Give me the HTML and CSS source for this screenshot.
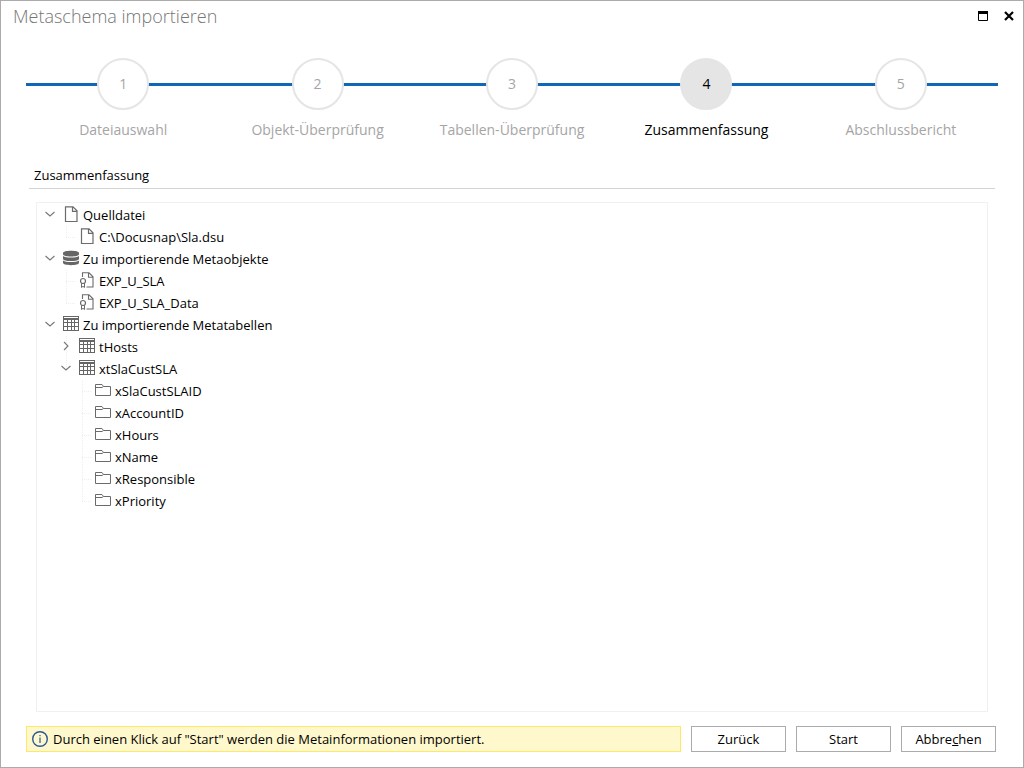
FILE: index.html
```
<!DOCTYPE html>
<html lang="de">
<head>
    <meta charset="UTF-8">
    <meta name="viewport" content="width=device-width, initial-scale=1.0">
    <title>Metaschema importieren</title>
    <link rel="stylesheet" href="styles.css">
</head>
<body>
<!-- icons used more than once -->
<svg class="symbols" width="0" height="0" aria-hidden="true">
    <symbol id="chevron-down" viewBox="0 0 16 16">
        <path d="M3.500 6L8 10l4.500-4" fill="none" stroke="#777" stroke-width="1.1"/>
    </symbol>
    <symbol id="chevron-right" viewBox="0 0 16 16">
        <path d="M6 4l4 4-4 4" fill="none" stroke="#777" stroke-width="1.1"/>
    </symbol>
    <symbol id="file" viewBox="0 0 16 16">
        <path d="M2.500 .8h7.500l4 4v10.700H2.500zM9.500 .8v4.500H14" fill="none" stroke="#6b6b6b" stroke-width="1.200"/>
    </symbol>
    <symbol id="database" viewBox="0 0 16 16">
        <path d="M0 3.200C0 1.600 3.500 .8 8 .8s8 .8 8 2.400v1C16 5.700 12.500 6.400 8 6.400S0 5.700 0 4.200z" fill="#666"/>
        <path d="M0 6c1.500 1 4.500 1.500 8 1.500S14.500 7 16 6v2.700c0 1.600-3.500 2.300-8 2.300S0 10.300 0 8.700z" fill="#666"/>
        <path d="M0 10.500c1.500 1 4.500 1.500 8 1.500s6.500-.5 8-1.500v2.300c0 1.600-3.500 2.400-8 2.400S0 14.400 0 12.800z" fill="#666"/>
    </symbol>
    <symbol id="object" viewBox="0 0 16 16">
        <path d="M3.500 5V.8H10l4 4v10.200H7.500M9.500 .8v4.500H14" fill="none" stroke="#6b6b6b" stroke-width="1.100"/>
        <circle cx="4" cy="9" r="2.500" fill="#fff" stroke="#6b6b6b" stroke-width="1.200"/>
        <path d="M2.500 11.500v4L4 14.300l1.500 1.200v-4" fill="none" stroke="#6b6b6b"/>
    </symbol>
    <symbol id="table" viewBox="0 0 16 16">
        <path d="M0 0h16v15H0z" fill="#666"/>
        <path d="M1 1h14v1H1zM1 4h3v2H1zM5 4h3v2H5zM9 4h2v2H9zM12 4h3v2h-3zM1 7h3v3H1zM5 7h3v3H5zM9 7h2v3H9zM12 7h3v3h-3zM1 11h3v3H1zM5 11h3v3H5zM9 11h2v3H9zM12 11h3v3h-3z" fill="#fff"/>
    </symbol>
    <symbol id="folder" viewBox="0 0 16 16">
        <path d="M.5 2.500h6.500l1.500 2h7v9H.5zM.5 5.500H7l1.500-1" fill="none" stroke="#6b6b6b"/>
    </symbol>
</svg>

<div class="window">
    <header class="titlebar">
        <h1>Metaschema importieren</h1>
        <button type="button" class="window-button" aria-label="Maximieren">
            <svg width="10" height="10" viewBox="0 0 10 10"><path d="M.5 1.500h9v8h-9z" fill="none" stroke="#000"/><path d="M0 0h10v3H0z"/></svg>
        </button>
        <button type="button" class="window-button" aria-label="Schließen">
            <svg width="10" height="10" viewBox="0 0 10 10"><path d="M1 1l8 8M9 1L1 9" stroke="#000" stroke-width="2.200"/></svg>
        </button>
    </header>

    <ol class="steps">
        <li class="step"><span class="step-number">1</span>Dateiauswahl</li>
        <li class="step"><span class="step-number">2</span>Objekt-Überprüfung</li>
        <li class="step"><span class="step-number">3</span>Tabellen-Überprüfung</li>
        <li class="step active" aria-current="step"><span class="step-number">4</span>Zusammenfassung</li>
        <li class="step"><span class="step-number">5</span>Abschlussbericht</li>
    </ol>

    <main class="summary">
        <h2>Zusammenfassung</h2>
        <div class="tree-box">
            <ul class="tree">
                <li>
                    <div class="row">
                        <button type="button" class="toggle" aria-label="Quelldatei" aria-expanded="true"><svg class="icon"><use href="#chevron-down"/></svg></button>
                        <svg class="icon"><use href="#file"/></svg>
                        <span>Quelldatei</span>
                    </div>
                    <ul>
                        <li><div class="row leaf"><svg class="icon"><use href="#file"/></svg><span>C:\Docusnap\Sla.dsu</span></div></li>
                    </ul>
                </li>
                <li>
                    <div class="row">
                        <button type="button" class="toggle" aria-label="Zu importierende Metaobjekte" aria-expanded="true"><svg class="icon"><use href="#chevron-down"/></svg></button>
                        <svg class="icon"><use href="#database"/></svg>
                        <span>Zu importierende Metaobjekte</span>
                    </div>
                    <ul>
                        <li><div class="row leaf"><svg class="icon"><use href="#object"/></svg><span>EXP_U_SLA</span></div></li>
                        <li><div class="row leaf"><svg class="icon"><use href="#object"/></svg><span>EXP_U_SLA_Data</span></div></li>
                    </ul>
                </li>
                <li>
                    <div class="row">
                        <button type="button" class="toggle" aria-label="Zu importierende Metatabellen" aria-expanded="true"><svg class="icon"><use href="#chevron-down"/></svg></button>
                        <svg class="icon"><use href="#table"/></svg>
                        <span>Zu importierende Metatabellen</span>
                    </div>
                    <ul>
                        <li>
                            <div class="row">
                                <button type="button" class="toggle" aria-label="tHosts" aria-expanded="false"><svg class="icon"><use href="#chevron-right"/></svg></button>
                                <svg class="icon"><use href="#table"/></svg>
                                <span>tHosts</span>
                            </div>
                        </li>
                        <li>
                            <div class="row">
                                <button type="button" class="toggle" aria-label="xtSlaCustSLA" aria-expanded="true"><svg class="icon"><use href="#chevron-down"/></svg></button>
                                <svg class="icon"><use href="#table"/></svg>
                                <span>xtSlaCustSLA</span>
                            </div>
                            <ul>
                                <li><div class="row leaf"><svg class="icon"><use href="#folder"/></svg><span>xSlaCustSLAID</span></div></li>
                                <li><div class="row leaf"><svg class="icon"><use href="#folder"/></svg><span>xAccountID</span></div></li>
                                <li><div class="row leaf"><svg class="icon"><use href="#folder"/></svg><span>xHours</span></div></li>
                                <li><div class="row leaf"><svg class="icon"><use href="#folder"/></svg><span>xName</span></div></li>
                                <li><div class="row leaf"><svg class="icon"><use href="#folder"/></svg><span>xResponsible</span></div></li>
                                <li><div class="row leaf"><svg class="icon"><use href="#folder"/></svg><span>xPriority</span></div></li>
                            </ul>
                        </li>
                    </ul>
                </li>
            </ul>
        </div>
    </main>

    <footer class="footer">
        <p class="hint">
            <svg class="icon" viewBox="0 0 16 16"><circle cx="8" cy="8" r="7.300" fill="none" stroke="#2b579a" stroke-width="1.400"/><path d="M8 6.500v5.500M8 4v1.300" stroke="#2b579a" stroke-width="1.200"/></svg>
            <span>Durch einen Klick auf "Start" werden die Metainformationen importiert.</span>
        </p>
        <button type="button" class="button">Zurück</button>
        <button type="button" class="button">Start</button>
        <button type="button" class="button" accesskey="c">Abbre<u>c</u>hen</button>
    </footer>
</div>
</body>
</html>
```
FILE: styles.css
```
* {
    box-sizing: border-box;
}

body {
    margin: 0;
    background-color: #fff;
    color: #000;
    font-family: "Open Sans", "Noto Sans", sans-serif;
    font-size: 13px;
}

h1, h2, p, ul, ol {
    margin: 0;
    padding: 0;
    font-weight: normal;
}

ul, ol {
    list-style: none;
}

button {
    padding: 0;
    font: inherit;
    color: inherit;
    cursor: pointer;
}

.symbols {
    display: none;
}

.icon {
    display: block;
    flex: none;
    width: 16px;
    height: 16px;
}

.window {
    display: flex;
    flex-direction: column;
    min-height: 100vh;
    border: 1px solid #ababab;
}

/* title bar */
.titlebar {
    display: flex;
    align-items: center;
    height: 30px;
    padding: 0 4px 0 12px;
}

.titlebar h1 {
    flex: 1;
    color: #767676;
    font-size: 18px;
    font-weight: 300;
    line-height: 30px;
}

.window-button {
    display: flex;
    align-items: center;
    justify-content: center;
    width: 20px;
    height: 20px;
    margin-left: 6px;
    border: none;
    background: none;
}

/* wizard steps */
.steps {
    display: flex;
    margin: 27px 25px 0;
    background: linear-gradient(#0f67b6, #0f67b6) 0 25px / 100% 3px no-repeat;
}

.step {
    display: flex;
    flex: 1;
    flex-direction: column;
    align-items: center;
    gap: 10px;
    color: #a5a5a5;
    font-size: 14px;
    line-height: 20px;
}

.step-number {
    width: 52px;
    height: 52px;
    border: 2px solid #e5e5e5;
    border-radius: 50%;
    background-color: #fff;
    line-height: 48px;
    text-align: center;
}

.active {
    color: #000;
}

.active .step-number {
    background-color: #e5e5e5;
}

/* summary */
.summary {
    display: flex;
    flex: 1;
    flex-direction: column;
    margin: 25px 28px 0;
}

.summary h2 {
    padding: 0 5px 3px;
    border-bottom: 1px solid #d4d4d4;
    font-size: 13px;
    line-height: 20px;
}

.tree-box {
    flex: 1;
    margin: 13px 7px 14px;
    padding: 1px 5px;
    border: 1px solid #f0f0f0;
}

/* faint dotted guide line, one piece per child */
.tree ul > li {
    padding-left: 16px;
    background: repeating-linear-gradient(#eee 0 1px, #fff 1px 2px) 24px 0 / 1px 100% no-repeat;
}

.tree ul > li:last-child {
    background-size: 1px 11px;
}

.row {
    display: flex;
    align-items: flex-start;
    height: 22px;
    padding: 2px 0;
    line-height: 18px;
    white-space: nowrap;
}

.row span {
    margin-left: 4px;
}

.leaf {
    padding-left: 21px;
    background: repeating-linear-gradient(90deg, #eee 0 1px, #fff 1px 2px) 8px 50% / 10px 1px no-repeat;
}

.toggle {
    width: 16px;
    height: 16px;
    margin-right: 5px;
    border: none;
    background: none;
}

/* footer */
.footer {
    display: flex;
    gap: 10px;
    padding: 0 27px 15px 25px;
}

.hint {
    display: flex;
    flex: 1;
    align-items: center;
    gap: 5px;
    padding: 0 5px;
    border: 1px solid #fce96a;
    background-color: #fff8cc;
}

.button {
    width: 95px;
    height: 26px;
    border: 1px solid #ababab;
    background-color: #fff;
}

.button:hover {
    background-color: #e5e5e5;
}
```
